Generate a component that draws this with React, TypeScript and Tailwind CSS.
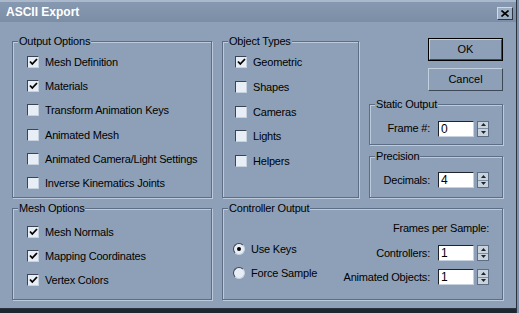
import React from 'react';

const font = { fontFamily: '"Liberation Sans", Arial, sans-serif' };

function Group({ label, className, children }: { label: string; className: string; children?: React.ReactNode }) {
  return (
    <div className={`relative border border-[#5d6d84] shadow-[1px_1px_0_#bccadb,inset_1px_1px_0_#bccadb] ${className}`}>
      <span className="absolute left-[5px] top-[-8px] bg-[#8ea0b8] px-[1px] leading-[14px] text-[11px] tracking-[-0.2px] text-black">
        {label}
      </span>
      {children}
    </div>
  );
}

function Check({ label, checked, h }: { label: string; checked?: boolean; h: string }) {
  return (
    <div className={`flex items-center gap-[6px] ${h}`}>
      <div className="flex h-[12px] w-[12px] items-center justify-center border-t border-l border-t-[#3b4452] border-l-[#3b4452] border-b border-r border-b-[#c6d2e0] border-r-[#c6d2e0] bg-[#e8eef5]">
        {checked && (
          <svg width="9" height="8" viewBox="0 0 9 8">
            <path d="M1 3.5 L3.3 6 L8 1" fill="none" stroke="#000" strokeWidth="1.8" />
          </svg>
        )}
      </div>
      <span className="text-[11px] leading-[14px] tracking-[-0.2px] text-black">{label}</span>
    </div>
  );
}

function Radio({ label, checked }: { label: string; checked?: boolean }) {
  return (
    <div className="flex h-[24px] items-center gap-[6px]">
      <div className="flex h-[12px] w-[12px] items-center justify-center rounded-full border border-t-[#3b4452] border-l-[#3b4452] border-b-[#c6d2e0] border-r-[#c6d2e0] bg-[#e8eef5]">
        {checked && <div className="h-[4px] w-[4px] rounded-full bg-black" />}
      </div>
      <span className="text-[11px] leading-[14px] tracking-[-0.2px] text-black">{label}</span>
    </div>
  );
}

function Spinner({ value }: { value: string }) {
  return (
    <div className="flex items-center gap-[3px]">
      <div className="flex h-[16px] w-[36px] items-center border-t border-l border-t-[#1e242c] border-l-[#1e242c] border-b border-r border-b-[#c6d2e0] border-r-[#c6d2e0] bg-white pl-[2px] text-[12px] leading-[14px] text-black">
        {value}
      </div>
      <div className="flex h-[16px] w-[12px] flex-col border border-[#5d6d84] bg-[#c9d3de]">
        <div className="flex flex-1 items-center justify-center border-b border-[#7f8ea2]">
          <svg width="5" height="3" viewBox="0 0 5 3"><path d="M0 3 L2.5 0 L5 3 Z" fill="#1e242c" /></svg>
        </div>
        <div className="flex flex-1 items-center justify-center">
          <svg width="5" height="3" viewBox="0 0 5 3"><path d="M0 0 L2.5 3 L5 0 Z" fill="#1e242c" /></svg>
        </div>
      </div>
    </div>
  );
}

function Button({ label, isDefault }: { label: string; isDefault?: boolean }) {
  return (
    <div className={`h-[23px] w-[75px] ${isDefault ? 'border border-black' : ''}`}>
      <div className="flex h-full w-full items-center justify-center border-t border-l border-t-[#c3d0de] border-l-[#c3d0de] border-b border-r border-b-[#3e4856] border-r-[#3e4856] bg-[#8ea0b8] text-[11px] text-black">
        {label}
      </div>
    </div>
  );
}

export default function App() {
  return (
    <div className="relative flex h-[313px] w-[519px] flex-col overflow-hidden bg-[#8ea0b8] select-none" style={font}>
      {/* title bar */}
      <div className="flex h-[22px] items-center justify-between border-t-2 border-[#a9b8ca] bg-gradient-to-b from-[#8799b0] to-[#7b8ea7] pl-[6px] pr-[6px]">
        <span className="text-[12px] font-bold text-white">ASCII Export</span>
        <div className="mt-[3px] flex h-[13px] w-[16px] items-center justify-center border-t border-l border-t-[#d0dae6] border-l-[#d0dae6] border-b border-r border-b-[#2e3642] border-r-[#2e3642] bg-[#9fafc3]">
          <svg width="8" height="7" viewBox="0 0 8 7">
            <path d="M0.5 0.5 L7.5 6.5 M7.5 0.5 L0.5 6.5" stroke="#000" strokeWidth="1.6" />
          </svg>
        </div>
      </div>

      <div className="flex flex-1 flex-col pl-[12px] pt-[19px]">
        <div className="flex items-start">
          <Group label="Output Options" className="h-[157px] w-[200px]">
            <div className="flex flex-col pl-[14px] pt-[8px]">
              <Check h="h-[24.2px]" label="Mesh Definition" checked />
              <Check h="h-[24.2px]" label="Materials" checked />
              <Check h="h-[24.2px]" label="Transform Animation Keys" />
              <Check h="h-[24.2px]" label="Animated Mesh" />
              <Check h="h-[24.2px]" label="Animated Camera/Light Settings" />
              <Check h="h-[24.2px]" label="Inverse Kinematics Joints" />
            </div>
          </Group>

          <Group label="Object Types" className="ml-[10px] h-[157px] w-[137px]">
            <div className="flex flex-col pl-[12px] pt-[8px]">
              <Check h="h-[24.7px]" label="Geometric" checked />
              <Check h="h-[24.7px]" label="Shapes" />
              <Check h="h-[24.7px]" label="Cameras" />
              <Check h="h-[24.7px]" label="Lights" />
              <Check h="h-[24.7px]" label="Helpers" />
            </div>
          </Group>

          <div className="-mt-[3px] ml-[10px] flex w-[134px] flex-col items-end">
            <Button label="OK" isDefault />
            <div className="mt-[7px]">
              <Button label="Cancel" />
            </div>
            <Group label="Static Output" className="mt-[13px] h-[41px] w-[134px]">
              <div className="flex h-full items-center justify-end gap-[8px] pr-[13px] pt-[8px]">
                <span className="text-[11px] tracking-[-0.2px] text-black">Frame #:</span>
                <Spinner value="0" />
              </div>
            </Group>
            <Group label="Precision" className="mt-[11px] h-[42px] w-[134px]">
              <div className="flex h-full items-center justify-end gap-[8px] pr-[13px] pt-[6px]">
                <span className="text-[11px] tracking-[-0.2px] text-black">Decimals:</span>
                <Spinner value="4" />
              </div>
            </Group>
          </div>
        </div>

        <div className="mt-[10px] flex items-start">
          <Group label="Mesh Options" className="h-[92px] w-[200px]">
            <div className="flex flex-col pl-[14px] pt-[11px]">
              <Check h="h-[24px]" label="Mesh Normals" checked />
              <Check h="h-[24px]" label="Mapping Coordinates" checked />
              <Check h="h-[24px]" label="Vertex Colors" checked />
            </div>
          </Group>

          <Group label="Controller Output" className="ml-[10px] h-[92px] w-[281px]">
            <div className="flex h-full justify-between pl-[10px] pr-[13px]">
              <div className="flex flex-col pt-[28px]">
                <Radio label="Use Keys" checked />
                <Radio label="Force Sample" />
              </div>
              <div className="flex flex-col items-end pt-[12px]">
                <span className="mb-[6px] text-[11px] leading-[14px] tracking-[-0.2px] text-black">Frames per Sample:</span>
                <div className="flex h-[24px] items-center gap-[8px]">
                  <span className="text-[11px] tracking-[-0.2px] text-black">Controllers:</span>
                  <Spinner value="1" />
                </div>
                <div className="flex h-[24px] items-center gap-[8px]">
                  <span className="text-[11px] tracking-[-0.2px] text-black">Animated Objects:</span>
                  <Spinner value="1" />
                </div>
              </div>
            </div>
          </Group>
        </div>
      </div>

      {/* window frame edges */}
      <div className="absolute bottom-0 left-0 h-[5px] w-full border-t border-[#2a323e] bg-[#1e2632]" />
      <div className="absolute right-0 top-0 h-full w-[3px] border-l border-[#2a323e] bg-[#7f91a8]" />
    </div>
  );
}
